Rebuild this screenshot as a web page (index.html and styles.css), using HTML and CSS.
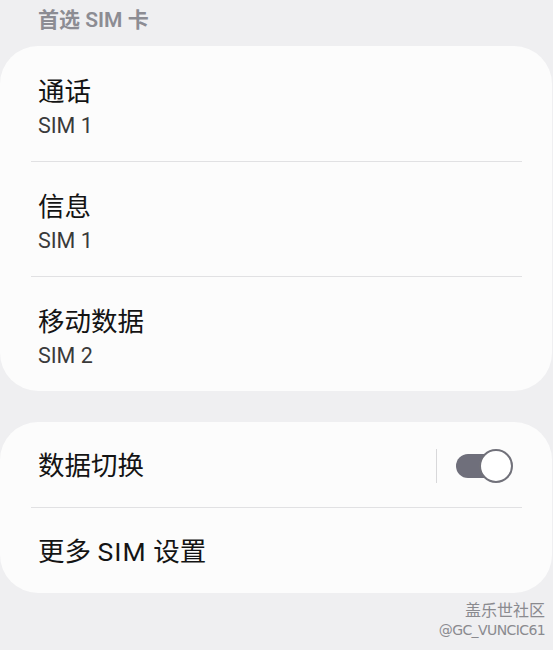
FILE: index.html
```html
<!DOCTYPE html>
<html lang="zh-CN">
<head>
<meta charset="utf-8">
<title>SIM 卡管理器</title>
<link rel="stylesheet" href="styles.css">
</head>
<body>
<div class="page">
  <div class="section-title">首选 SIM 卡</div>
  <div class="card card-first">
    <div class="row row-tall">
      <div class="title">通话</div>
      <div class="sub">SIM 1</div>
    </div>
    <div class="divider"></div>
    <div class="row row-tall">
      <div class="title">信息</div>
      <div class="sub">SIM 1</div>
    </div>
    <div class="divider"></div>
    <div class="row row-tall">
      <div class="title">移动数据</div>
      <div class="sub">SIM 2</div>
    </div>
  </div>
  <div class="card card-second">
    <div class="row row-short">
      <div class="title">数据切换</div>
      <div class="switch-area">
        <div class="vsep"></div>
        <div class="switch"><div class="knob"></div></div>
      </div>
    </div>
    <div class="divider"></div>
    <div class="row row-short">
      <div class="title">更多 <span class="wide">SIM</span> 设置</div>
    </div>
  </div>
  <div class="watermark">
    <div class="wm1">盖乐世社区</div>
    <div class="wm2">@GC_VUNCIC61</div>
  </div>
</div>
</body>
</html>
```
FILE: styles.css
```css
html, body {
  margin: 0;
  padding: 0;
  background: #efeff1;
}
body {
  width: 553px;
  height: 650px;
  overflow: hidden;
  font-family: Roboto, "Noto Sans CJK SC", sans-serif;
}
.page {
  display: flex;
  flex-direction: column;
}
.section-title {
  height: 46px;
  box-sizing: border-box;
  padding: 10px 0 0 38px;
  font-size: 21px;
  line-height: 28px;
  font-weight: 600;
  color: #8c8c93;
  margin-top: -4px;
  margin-bottom: 4px;
}
.card {
  background: #fcfcfc;
  border-radius: 38px;
  margin: 0 1px 0 0;
  display: flex;
  flex-direction: column;
}
.card-first {
  padding-top: 1px;
}
.card-second {
  margin-top: 31px;
}
.row {
  padding: 0 31px 0 38px;
  display: flex;
  flex-direction: column;
  justify-content: center;
  box-sizing: border-box;
}
.row-tall {
  height: 114px;
  padding-top: 6px;
}
.row-short {
  height: 85px;
  flex-direction: row;
  align-items: center;
  justify-content: space-between;
  padding-top: 2px;
}
.title {
  font-size: 26.5px;
  line-height: 34px;
  color: #141414;
}
.wide {
  letter-spacing: 1px;
}
.sub {
  font-size: 21.5px;
  line-height: 26px;
  color: #3a3a3a;
  margin-top: 4px;
}
.divider {
  height: 1px;
  background: #e1e1e3;
  margin: 0 30px 0 31px;
}
.switch-area {
  display: flex;
  align-items: center;
  gap: 19px;
  margin-right: 9px;
}
.vsep {
  width: 1px;
  height: 34px;
  background: #d8d8da;
}
.switch {
  position: relative;
  width: 52px;
  height: 24px;
  border-radius: 12px;
  background: #6f6f7b;
  margin-right: 4px;
}
.knob {
  position: absolute;
  right: -5px;
  top: -5px;
  width: 30px;
  height: 30px;
  border-radius: 50%;
  background: #ffffff;
  border: 2px solid #71717a;
}
.watermark {
  margin-top: 5px;
  padding-right: 8px;
  display: flex;
  flex-direction: column;
  align-items: flex-end;
  color: #8a8a8f;
}
.wm1 {
  font-size: 16px;
  line-height: 22px;
  font-family: "Noto Sans CJK SC", sans-serif;
}
.wm2 {
  font-size: 14px;
  line-height: 20px;
  font-family: "DejaVu Sans", sans-serif;
  letter-spacing: -0.6px;
}
```
